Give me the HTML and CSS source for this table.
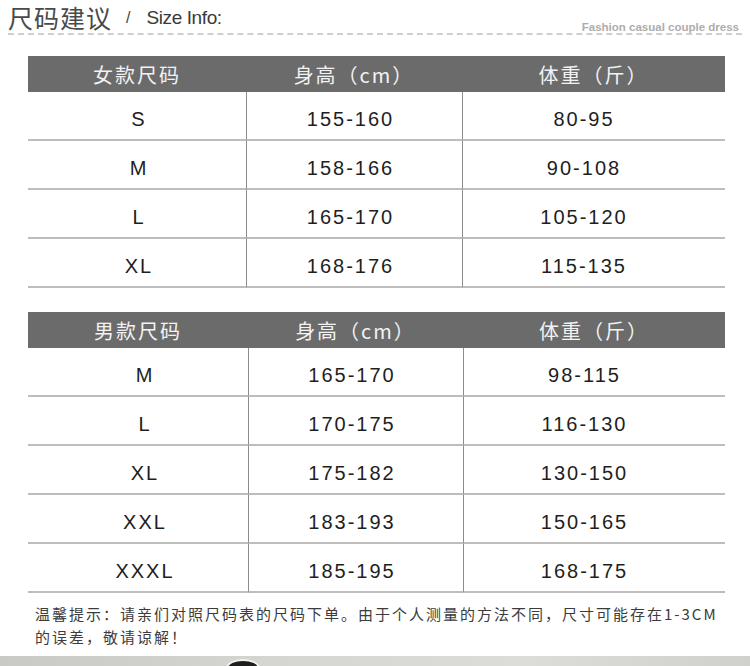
FILE: index.html
```html
<!DOCTYPE html>
<html lang="zh">
<head>
<meta charset="utf-8">
<link rel="stylesheet" href="styles.css">
</head>
<body>
<div class="page">
  <div class="title-bar">
    <span class="title-cn">尺码建议</span>
    <span class="slash">/</span>
    <span class="title-en">Size Info:</span>
    <span class="tagline">Fashion casual couple dress</span>
  </div>

  <div class="size-table first">
    <div class="head">女款尺码</div><div class="head">身高（cm）</div><div class="head">体重（斤）</div>
    <div class="cell size">S</div><div class="cell mid">155-160</div><div class="cell last">80-95</div>
    <div class="cell size">M</div><div class="cell mid">158-166</div><div class="cell last">90-108</div>
    <div class="cell size">L</div><div class="cell mid">165-170</div><div class="cell last">105-120</div>
    <div class="cell size">XL</div><div class="cell mid">168-176</div><div class="cell last">115-135</div>
  </div>

  <div class="size-table second">
    <div class="head">男款尺码</div><div class="head">身高（cm）</div><div class="head">体重（斤）</div>
    <div class="cell size">M</div><div class="cell mid">165-170</div><div class="cell last">98-115</div>
    <div class="cell size">L</div><div class="cell mid">170-175</div><div class="cell last">116-130</div>
    <div class="cell size">XL</div><div class="cell mid">175-182</div><div class="cell last">130-150</div>
    <div class="cell size">XXL</div><div class="cell mid">183-193</div><div class="cell last">150-165</div>
    <div class="cell size">XXXL</div><div class="cell mid">185-195</div><div class="cell last">168-175</div>
  </div>

  <p class="note">温馨提示：请亲们对照尺码表的尺码下单。由于个人测量的方法不同，尺寸可能存在1-3CM的误差，敬请谅解！</p>

  <div class="strip"><span class="blob"></span></div>
</div>
</body>
</html>
```
FILE: styles.css
```css
html, body {
  margin: 0;
  padding: 0;
  background: #fff;
}
.page {
  width: 750px;
  height: 666px;
  overflow: hidden;
  font-family: "Liberation Sans", "Noto Sans CJK SC", sans-serif;
  color: #222;
}
.title-bar {
  margin: 0 8px;
  padding-top: 2px;
  height: 31px;
  display: flex;
  align-items: center;
  border-bottom: 2px dashed #cfcfcf;
}
.title-cn {
  font-family: "Noto Sans CJK SC", sans-serif;
  font-size: 25px;
  font-weight: 400;
  letter-spacing: 1px;
  color: #4a4a4a;
  line-height: 31px;
}
.slash {
  font-size: 16px;
  color: #444;
  margin-left: 14px;
}
.title-en {
  font-size: 19px;
  color: #3a3a3a;
  margin-left: 16px;
  letter-spacing: -0.4px;
}
.tagline {
  margin-left: auto;
  margin-right: 3px;
  margin-top: 18px;
  font-size: 11.5px;
  font-weight: bold;
  color: #adadad;
}
.size-table {
  display: grid;
  grid-template-columns: 218px 216px 263px;
  margin-left: 28px;
  width: 697px;
}
.size-table.first {
  margin-top: 21px;
}
.size-table.second {
  margin-top: 24px;
  grid-template-columns: 220px 215px 262px;
}
.head {
  height: 36px;
  background: #6b6b6b;
  color: #f2f2f2;
  font-family: "Noto Sans CJK SC", sans-serif;
  font-size: 20px;
  letter-spacing: 2px;
  display: flex;
  align-items: center;
  justify-content: center;
}
.cell {
  box-sizing: border-box;
  height: 49px;
  padding-top: 8px;
  border-bottom: 2px solid #bdbdbd;
  font-size: 20px;
  letter-spacing: 2px;
  display: flex;
  align-items: center;
  justify-content: center;
  color: #1e1e1e;
}
.first .cell.size {
  padding-left: 4px;
}
.second .cell.size {
  padding-left: 14px;
}
.cell.mid {
  border-left: 1px solid #8c8c8c;
  padding-right: 8px;
}
.cell.last {
  border-left: 1px solid #8c8c8c;
  padding-right: 20px;
}
.note {
  margin: 9px 0 0 35px;
  width: 690px;
  font-family: "Noto Sans CJK SC", sans-serif;
  font-size: 15px;
  line-height: 23px;
  letter-spacing: 2px;
  color: #3c3c3c;
}
.strip {
  position: relative;
  margin-top: 8px;
  height: 14px;
  background: linear-gradient(90deg, #c9c9c5 0%, #d6d6d2 40%, #dcdcd8 70%, #d0d0cc 100%);
}
.blob {
  position: absolute;
  left: 228px;
  top: 5px;
  width: 30px;
  height: 14px;
  border-radius: 50%;
  background: #1e1e1e;
  box-shadow: 0 0 0 2px #f4f4f4;
}
```
